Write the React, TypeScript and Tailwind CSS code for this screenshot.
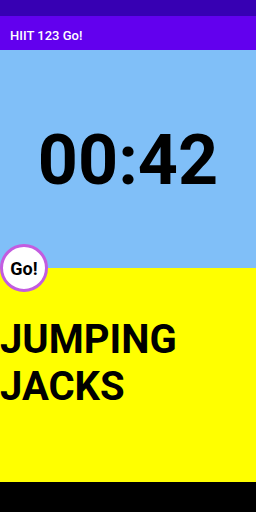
export default function App() {
    return (
        <div className="relative w-[256px] h-[512px] flex flex-col overflow-hidden font-['Roboto',sans-serif]">
            {/* status bar */}
            <div className="h-[16px] bg-[#3700b3]" />

            {/* app bar */}
            <div className="h-[34px] bg-[#6200ee] flex items-center px-[10px] pt-[6px]">
                <span className="text-white text-[13px] font-medium">HIIT 123 Go!</span>
            </div>

            {/* timer */}
            <div className="h-[218px] bg-[#80bff8] flex items-center justify-center">
                <span className="text-black text-[70px] font-bold leading-none pt-[2px]">00:42</span>
            </div>

            {/* exercise */}
            <div className="h-[214px] bg-[#ffff00] pt-[48px]">
                <p className="text-black text-[40px] font-bold leading-[47px]">
                    JUMPING<br />JACKS
                </p>
            </div>

            {/* nav bar */}
            <div className="flex-1 bg-black" />

            <button className="absolute left-0 top-[244px] w-[48px] h-[48px] rounded-full bg-white border-[3px] border-[#c35ce0] flex items-center justify-center text-black text-[18px] font-bold">
                Go!
            </button>
        </div>
    )
}
